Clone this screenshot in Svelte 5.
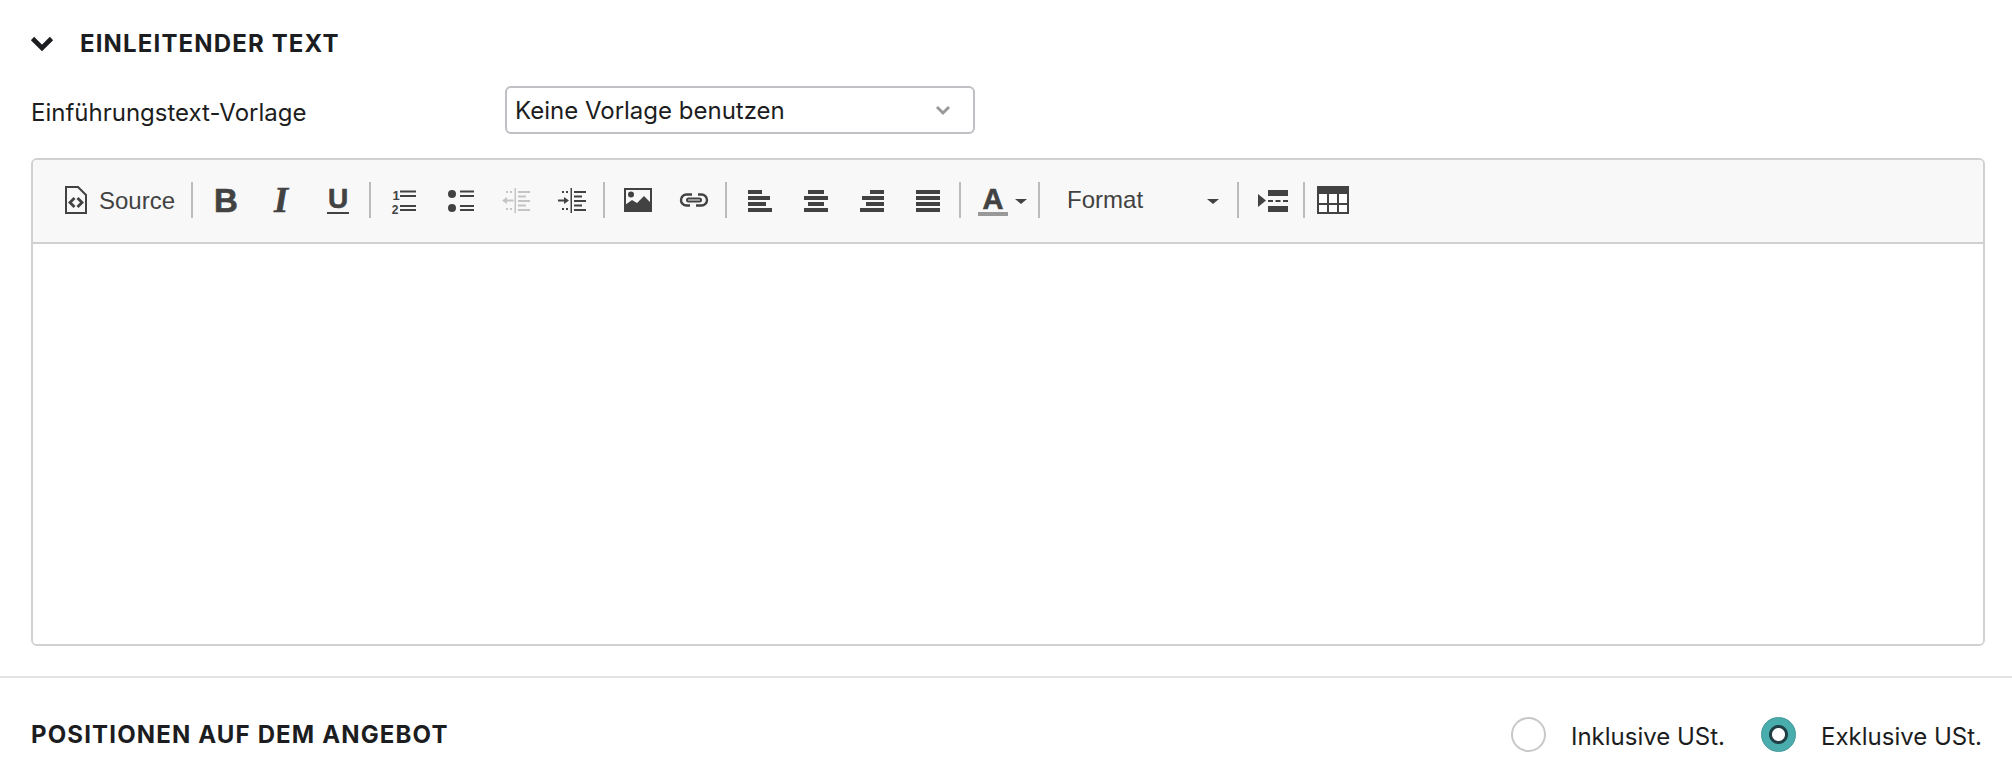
<script>
  const alignLeft = [14, 22, 18, 24];
  const alignCenter = [16, 24, 16, 24];
  const alignRight = [14, 22, 18, 24];
  const rows = [6, 12, 18, 24];
  const listRows = [6.5, 11, 21, 25];
  const indentRows = [
    [0, 12], [4.5, 8], [9, 12], [13.5, 8], [18, 12]
  ];
</script>

<div class="page">
  <section class="intro">
    <header class="section-head">
      <svg class="chevron" width="22" height="14" viewBox="0 0 22 14" aria-hidden="true">
        <path d="M1.500 2.500l9.500 9.500 9.500-9.500" fill="none" stroke="#1c1d21" stroke-width="4.600" />
      </svg>
      <h2>EINLEITENDER TEXT</h2>
    </header>

    <div class="field">
      <span class="field-label">Einführungstext-Vorlage</span>
      <div class="select">
        <span>Keine Vorlage benutzen</span>
        <svg width="16" height="11" viewBox="0 0 16 11" aria-hidden="true">
          <path d="M2 2l6 6 6-6" fill="none" stroke="#9a9a9a" stroke-width="3" />
        </svg>
      </div>
    </div>

    <div class="editor">
      <div class="toolbar">
        <button class="source" type="button">
          <svg width="24" height="32" viewBox="0 0 24 32" aria-hidden="true">
            <path d="M2 3h12l8 8v18H2z" fill="none" stroke="#424242" stroke-width="2" />
            <path d="M10.500 14l-4.500 4.500 4.500 4.500M13.500 14l4.500 4.500-4.500 4.500" fill="none" stroke="#424242" stroke-width="2.800" />
          </svg>
          <span class="source-label">Source</span>
        </button>
        <i class="sep"></i>

        <button type="button">
          <svg width="32" height="32" viewBox="0 0 32 32" aria-hidden="true"><text class="glyph bold heavy" x="16" y="28" font-size="33">B</text></svg>
        </button>
        <button type="button">
          <svg width="32" height="32" viewBox="0 0 32 32" aria-hidden="true"><text class="glyph serif heavy" x="15" y="28" font-size="36">I</text></svg>
        </button>
        <button type="button">
          <svg width="32" height="32" viewBox="0 0 32 32" aria-hidden="true">
            <text class="glyph bold heavy" x="16" y="24" font-size="28">U</text>
            <rect x="5" y="28" width="22" height="2" fill="#424242" />
          </svg>
        </button>
        <i class="sep"></i>

        <button type="button">
          <svg width="32" height="32" viewBox="0 0 32 32" aria-hidden="true">
            <text class="glyph bold" x="8" y="15.500" font-size="13">1</text>
            <text class="glyph bold" x="7" y="30" font-size="12">2</text>
            {#each listRows as y}
              <rect x="12" {y} width="16" height="2" fill="#424242" />
            {/each}
          </svg>
        </button>
        <button type="button">
          <svg width="32" height="32" viewBox="0 0 32 32" aria-hidden="true">
            <circle cx="8" cy="10" r="4" fill="#424242" />
            <circle cx="8" cy="24" r="4" fill="#424242" />
            {#each listRows as y}
              <rect x="16" {y} width="14" height="2" fill="#424242" />
            {/each}
          </svg>
        </button>
        <button type="button">
          <svg width="32" height="32" viewBox="0 0 32 32" fill="#c4c4c4" aria-hidden="true">
            <rect x="14.500" y="4" width="1.500" height="25" />
            <path d="M2 16.500l5-3.500v2.500h6.500v2H7V20z" />
            <rect x="6" y="7" width="2" height="2" /><rect x="10" y="7" width="2" height="2" />
            <rect x="6" y="24" width="2" height="2" /><rect x="10" y="24" width="2" height="2" />
            {#each indentRows as [y, w]}
              <rect x="18" y={7 + y} width={w} height="2" />
            {/each}
          </svg>
        </button>
        <button type="button">
          <svg width="32" height="32" viewBox="0 0 32 32" fill="#424242" aria-hidden="true">
            <rect x="14.500" y="4" width="1.500" height="25" />
            <path d="M13 16.500L8 13v2.500H2v2h6V20z" />
            <rect x="6" y="7" width="2" height="2" /><rect x="10" y="7" width="2" height="2" />
            <rect x="6" y="24" width="2" height="2" /><rect x="10" y="24" width="2" height="2" />
            {#each indentRows as [y, w]}
              <rect x="18" y={7 + y} width={w} height="2" />
            {/each}
          </svg>
        </button>
        <i class="sep"></i>

        <button type="button">
          <svg width="32" height="32" viewBox="0 0 32 32" aria-hidden="true">
            <rect x="3" y="5" width="26" height="22" fill="none" stroke="#424242" stroke-width="2" />
            <circle cx="9" cy="10.500" r="3" fill="#424242" />
            <path d="M3 27v-6l7-5 5 3 7-7 7 7v8z" fill="#424242" />
          </svg>
        </button>
        <button type="button">
          <svg width="32" height="32" viewBox="0 0 32 32" fill="none" stroke="#424242" stroke-width="2.400" aria-hidden="true">
            <path d="M14 10.500H8.500a5.500 5.500 0 0 0 0 11H12" />
            <path d="M18 21.500h5.500a5.500 5.500 0 0 0 0-11H20" />
            <rect x="9" y="14.500" width="14" height="3" rx="1.500" stroke-width="2" />
          </svg>
        </button>
        <i class="sep"></i>

        <button type="button">
          <svg width="32" height="32" viewBox="0 0 32 32" fill="#424242" aria-hidden="true">
            {#each rows as y, n}
              <rect x="4" {y} width={alignLeft[n]} height="4" />
            {/each}
          </svg>
        </button>
        <button type="button">
          <svg width="32" height="32" viewBox="0 0 32 32" fill="#424242" aria-hidden="true">
            {#each rows as y, n}
              <rect x={16 - alignCenter[n] / 2} {y} width={alignCenter[n]} height="4" />
            {/each}
          </svg>
        </button>
        <button type="button">
          <svg width="32" height="32" viewBox="0 0 32 32" fill="#424242" aria-hidden="true">
            {#each rows as y, n}
              <rect x={28 - alignRight[n]} {y} width={alignRight[n]} height="4" />
            {/each}
          </svg>
        </button>
        <button type="button">
          <svg width="32" height="32" viewBox="0 0 32 32" fill="#424242" aria-hidden="true">
            {#each rows as y}
              <rect x="4" {y} width="24" height="4" />
            {/each}
          </svg>
        </button>
        <i class="sep"></i>

        <button class="color" type="button">
          <svg width="32" height="32" viewBox="0 0 32 32" aria-hidden="true">
            <text class="glyph bold heavy" x="16" y="25" font-size="29">A</text>
            <rect x="1" y="28" width="30" height="4" fill="#999" />
          </svg>
          <b class="caret"></b>
        </button>
        <i class="sep"></i>

        <button class="combo" type="button">
          <span>Format</span>
          <b class="caret"></b>
        </button>
        <i class="sep"></i>

        <button type="button">
          <svg width="32" height="32" viewBox="0 0 32 32" fill="#424242" aria-hidden="true">
            <path d="M2 10l8 6.500L2 23z" />
            <rect x="12" y="6" width="20" height="6" />
            <rect x="12" y="22" width="20" height="6" />
            <rect x="12" y="16" width="5" height="2" /><rect x="19.500" y="16" width="5" height="2" /><rect x="27" y="16" width="5" height="2" />
          </svg>
        </button>
        <i class="sep last"></i>

        <button type="button">
          <svg width="32" height="32" viewBox="0 0 32 32" aria-hidden="true">
            <rect x="0" y="2" width="32" height="28" fill="#424242" />
            {#each [2, 12, 22] as x}
              <rect {x} y="10" width="8" height="9" fill="#fff" />
              <rect {x} y="21" width="8" height="7" fill="#fff" />
            {/each}
          </svg>
        </button>
      </div>
      <div class="editor-body"></div>
    </div>
  </section>

  <section class="positions">
    <h2>POSITIONEN AUF DEM ANGEBOT</h2>
    <div class="tax">
      <label class="radio">
        <span class="dot"></span>
        <span class="radio-text">Inklusive USt.</span>
      </label>
      <label class="radio">
        <span class="dot checked"></span>
        <span class="radio-text">Exklusive USt.</span>
      </label>
    </div>
  </section>
</div>

<style>
  :global(body) {
    margin: 0;
    background: #fff;
  }

  .page {
    height: 770px;
    overflow: hidden;
    font-family: Inter, "Liberation Sans", sans-serif;
    color: #1c1d21;
  }

  h2 {
    margin: 0;
    padding-top: 2px;
    font-size: 24px;
    line-height: 30px;
    font-weight: 700;
    letter-spacing: 1.15px;
  }

  .intro {
    height: 617px;
    padding: 29px 27px 30px 31px;
    border-bottom: 2px solid #e4e4e4;
  }

  .section-head {
    display: flex;
    align-items: center;
    height: 28px;
    gap: 27px;
  }

  .chevron {
    flex: none;
    overflow: visible;
  }

  .field {
    display: flex;
    align-items: flex-start;
    margin-top: 29px;
    height: 48px;
  }

  .field-label {
    width: 474px;
    font-size: 24px;
    line-height: 47px;
    padding-top: 3px;
  }

  .select {
    width: 470px;
    height: 48px;
    box-sizing: border-box;
    border: 2px solid #bfbfc4;
    border-radius: 6px;
    padding: 1px 22px 0 8px;
    display: flex;
    align-items: center;
    justify-content: space-between;
    font-size: 24px;
  }

  .editor {
    margin-top: 24px;
    height: 488px;
    box-sizing: border-box;
    border: 2px solid #d1d1d1;
    border-radius: 6px;
    display: flex;
    flex-direction: column;
    overflow: hidden;
  }

  .toolbar {
    height: 84px;
    flex: none;
    box-sizing: border-box;
    background: #f8f8f8;
    border-bottom: 2px solid #d1d1d1;
    padding: 0 0 2px 31px;
    display: flex;
    align-items: center;
    color: #424242;
  }

  .toolbar svg {
    overflow: visible;
  }

  .toolbar button {
    flex: none;
    width: 56px;
    height: 40px;
    padding: 0;
    border: 0;
    background: none;
    display: flex;
    align-items: center;
    justify-content: center;
    color: inherit;
    font-family: "Liberation Sans", Arial, sans-serif;
    font-size: 24px;
  }

  .toolbar .source {
    width: auto;
    gap: 11px;
    padding-right: 13px;
  }

  .source-label {
    padding-top: 2px;
  }

  .toolbar .color {
    width: 69px;
    justify-content: flex-start;
    padding-left: 11px;
    gap: 6px;
  }

  .toolbar .combo {
    width: 189px;
    justify-content: space-between;
    padding: 0 15px 0 22px;
    box-sizing: border-box;
  }

  .caret {
    width: 0;
    height: 0;
    border-left: 6px solid transparent;
    border-right: 6px solid transparent;
    border-top: 5px solid #424242;
    margin-top: 2px;
  }

  .sep {
    flex: none;
    width: 2px;
    height: 36px;
    margin: 0 5px 0 3px;
    background: #bcbcbc;
  }

  .sep.last {
    margin-right: 0;
  }

  .glyph {
    fill: #424242;
    text-anchor: middle;
  }

  .heavy {
    stroke: #424242;
    stroke-width: 0.6px;
  }

  .bold {
    font-family: "Liberation Sans", Arial, sans-serif;
    font-weight: 700;
  }

  .serif {
    font-family: "Liberation Serif", serif;
    font-weight: 700;
    font-style: italic;
  }

  .editor-body {
    flex: 1;
    background: #fff;
  }

  .positions {
    display: flex;
    align-items: center;
    justify-content: space-between;
    padding: 0 30px 0 31px;
    height: 112px;
  }

  .tax {
    display: flex;
    gap: 36px;
    font-size: 24px;
  }

  .radio {
    display: flex;
    align-items: center;
    gap: 25px;
  }

  .radio-text {
    padding-top: 4px;
  }

  .dot {
    width: 35px;
    height: 35px;
    box-sizing: border-box;
    border-radius: 50%;
    border: 2px solid #c8c8c8;
    background: #fff;
  }

  .dot.checked {
    border: 1px solid #3d9696;
    background: radial-gradient(circle, #fff 0 6px, #1f3f44 7px 9px, #4aadad 10px);
  }
</style>
